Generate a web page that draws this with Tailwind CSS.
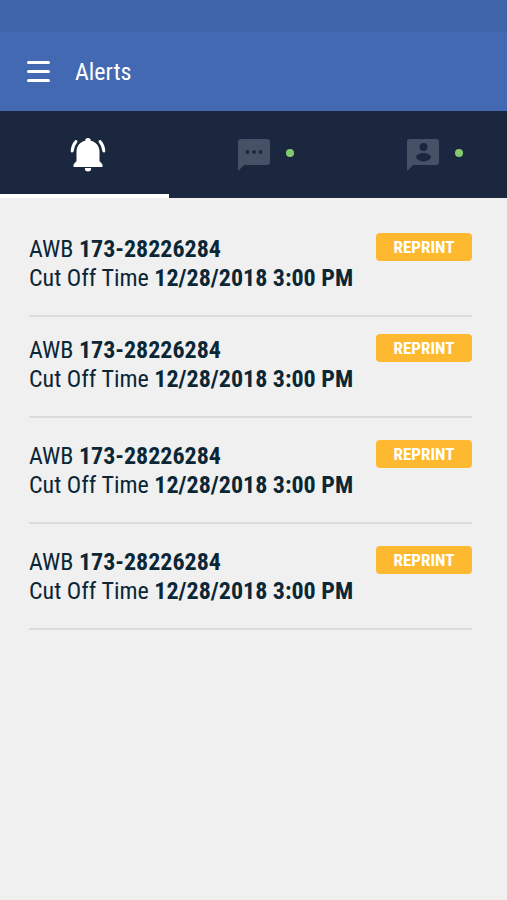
<!DOCTYPE html>
<html lang="en">
  <head>
    <meta charset="UTF-8" />
    <meta name="viewport" content="width=device-width, initial-scale=1.0" />
    <title>Alerts</title>
    <script src="https://cdn.jsdelivr.net/npm/@tailwindcss/browser@4"></script>
  </head>
  <body
    class="min-h-screen bg-[#f0f0f0] text-[#0b2635] font-['Roboto_Condensed','Liberation_Sans_Narrow',Roboto,sans-serif]"
  >
    <header class="bg-[#4369b2] text-white">
      <div class="h-8 bg-[#4065a9]"></div>
      <div class="flex h-[79px] items-center gap-6 px-[27px]">
        <button type="button" aria-label="Menu">
          <svg class="h-6 w-6" viewBox="0 0 24 24" fill="currentColor">
            <rect x="0" y="1" width="23" height="3" rx="1.5" />
            <rect x="0" y="10" width="23" height="3" rx="1.5" />
            <rect x="0" y="19" width="23" height="3" rx="1.5" />
          </svg>
        </button>
        <h1 class="text-2xl">Alerts</h1>
      </div>
    </header>

    <nav class="grid h-[87px] grid-cols-3 bg-[#1b273e] text-[#475166]">
      <a
        href="#alerts"
        aria-label="Alerts"
        class="flex items-center justify-center border-b-4 border-white pl-1.5 pt-1 text-white"
      >
        <svg class="h-9 w-9" viewBox="0 0 36 36" fill="currentColor">
          <path
            d="M18 1c1.700 0 2.700 1.100 2.900 2.700C26 5 29.500 9 29.500 14.500V24l3 3.500V30h-29v-2.500l3-3.500v-9.500C6.500 9 10 5 15.100 3.700 15.300 2.100 16.300 1 18 1z"
          />
          <path d="M14.800 31h6.400a3.200 3.600 0 0 1-6.400 0z" />
          <path
            d="M6 4.500Q2.500 8.500 2.200 14M30 4.500Q33.500 8.500 33.800 14"
            fill="none"
            stroke="currentColor"
            stroke-width="3"
            stroke-linecap="round"
          />
        </svg>
      </a>
      <a
        href="#messages"
        aria-label="Messages"
        class="flex items-center justify-center gap-4 pl-6"
      >
        <svg class="h-8 w-8" viewBox="0 0 32 32">
          <path
            d="M3 0h26a3 3 0 0 1 3 3v20a3 3 0 0 1-3 3H6l-6 6V3a3 3 0 0 1 3-3z"
            fill="currentColor"
          />
          <g fill="#1b273e">
            <circle cx="9.500" cy="13" r="1.900" />
            <circle cx="16" cy="13" r="1.900" />
            <circle cx="22.500" cy="13" r="1.900" />
          </g>
        </svg>
        <span class="mb-1 size-2 rounded-full bg-[#86ca70]"></span>
      </a>
      <a
        href="#contacts"
        aria-label="Contacts"
        class="flex items-center justify-center gap-4 pl-6"
      >
        <svg class="h-8 w-8" viewBox="0 0 32 32">
          <path
            d="M3 0h26a3 3 0 0 1 3 3v20a3 3 0 0 1-3 3H6l-6 6V3a3 3 0 0 1 3-3z"
            fill="currentColor"
          />
          <g fill="#1b273e">
            <circle cx="16.500" cy="8" r="4" />
            <path
              d="M9 18.500c0-3 4-4.500 7.500-4.500s7.500 1.500 7.500 4.500c-1.700 2.500-4.500 4-7.500 4s-5.800-1.500-7.500-4z"
            />
          </g>
        </svg>
        <span class="mb-1 size-2 rounded-full bg-[#86ca70]"></span>
      </a>
    </nav>

    <main class="pl-[29px] pr-[35px] pt-[35px]">
      <ul class="text-2xl leading-[29px]">
        <li class="flex items-start justify-between border-b-2 border-[#dcdcdc] pb-[22px]">
          <p class="pt-0.5">
            AWB <b>173-28226284</b><br />
            Cut Off Time <b>12/28/2018 3:00 PM</b>
          </p>
          <button
            type="button"
            class="h-7 w-24 shrink-0 rounded-sm bg-[#ffb931] text-[17px] font-bold text-white"
          >
            REPRINT
          </button>
        </li>
        <li class="flex items-start justify-between border-b-2 border-[#dcdcdc] pt-[17px] pb-[22px]">
          <p class="pt-0.5">
            AWB <b>173-28226284</b><br />
            Cut Off Time <b>12/28/2018 3:00 PM</b>
          </p>
          <button
            type="button"
            class="h-7 w-24 shrink-0 rounded-sm bg-[#ffb931] text-[17px] font-bold text-white"
          >
            REPRINT
          </button>
        </li>
        <li class="flex items-start justify-between border-b-2 border-[#dcdcdc] pt-[22px] pb-[22px]">
          <p class="pt-0.5">
            AWB <b>173-28226284</b><br />
            Cut Off Time <b>12/28/2018 3:00 PM</b>
          </p>
          <button
            type="button"
            class="h-7 w-24 shrink-0 rounded-sm bg-[#ffb931] text-[17px] font-bold text-white"
          >
            REPRINT
          </button>
        </li>
        <li class="flex items-start justify-between border-b-2 border-[#dcdcdc] pt-[22px] pb-[22px]">
          <p class="pt-0.5">
            AWB <b>173-28226284</b><br />
            Cut Off Time <b>12/28/2018 3:00 PM</b>
          </p>
          <button
            type="button"
            class="h-7 w-24 shrink-0 rounded-sm bg-[#ffb931] text-[17px] font-bold text-white"
          >
            REPRINT
          </button>
        </li>
      </ul>
    </main>
  </body>
</html>
